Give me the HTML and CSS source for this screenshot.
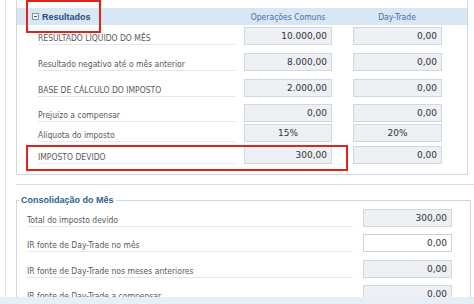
FILE: index.html
```html
<!DOCTYPE html>
<html lang="pt-BR">
  <head>
    <meta charset="UTF-8" />
    <title>Apuração do imposto</title>
    <link rel="stylesheet" href="styles.css">
  </head>
  <body>
    <div class="content">
      <section class="results">
        <div class="grid head">
          <div class="title"><span class="toggle"></span>Resultados</div>
          <div class="col-title">Operações Comuns</div>
          <div class="col-title">Day-Trade</div>
        </div>

        <div class="grid body">
          <div class="label">RESULTADO LÍQUIDO DO MÊS</div>
          <input class="field" value="10.000,00" readonly />
          <input class="field wide" value="0,00" readonly />

          <div class="label">Resultado negativo até o mês anterior</div>
          <input class="field" value="8.000,00" readonly />
          <input class="field wide" value="0,00" readonly />

          <div class="label">BASE DE CÁLCULO DO IMPOSTO</div>
          <input class="field" value="2.000,00" readonly />
          <input class="field wide" value="0,00" readonly />

          <div class="label">Prejuízo a compensar</div>
          <input class="field" value="0,00" readonly />
          <input class="field wide" value="0,00" readonly />

          <div class="label">Alíquota do imposto</div>
          <input class="field center" value="15%" readonly />
          <input class="field wide center" value="20%" readonly />

          <div class="label">IMPOSTO DEVIDO</div>
          <input class="field" value="300,00" readonly />
          <input class="field wide" value="0,00" readonly />
        </div>

        <!-- annotation boxes -->
        <div class="mark mark-title"></div>
        <div class="mark mark-row"></div>
      </section>

      <div class="divider"></div>

      <fieldset class="month">
        <legend>Consolidação do Mês</legend>
        <div class="month-rows">
          <div class="label">Total do imposto devido</div>
          <input class="field wide" value="300,00" readonly />

          <div class="label">IR fonte de Day-Trade no mês</div>
          <input class="field wide editable" value="0,00" />

          <div class="label">IR fonte de Day-Trade nos meses anteriores</div>
          <input class="field wide" value="0,00" readonly />

          <div class="label">IR fonte de Day-Trade a compensar</div>
          <input class="field wide" value="0,00" readonly />
        </div>
      </fieldset>
    </div>
    <div class="footer"></div>
  </body>
</html>
```

FILE: styles.css
```css
body {
  margin: 0;
  background-color: #fff;
  font-family: "DejaVu Sans Condensed", "DejaVu Sans", sans-serif;
  color: #555;
}

.content {
  height: 297px;
  overflow: hidden;
  margin-left: 5px;
  border-left: 1px solid #e1e5ea;
  padding-left: 10px;
}

.results {
  position: relative;
  width: 450px;
  padding: 8px 0 10px;
  border: 1px solid #cfd7e0;
  border-top: none;
}

.grid {
  display: grid;
  grid-template-columns: 227px 109px 89px;
}

.head {
  height: 17px;
  align-items: center;
  background-color: #d9e6f3;
}

.title {
  display: flex;
  align-items: center;
  padding-left: 15px;
  font-family: "Liberation Sans", Arial, sans-serif;
  font-size: 9px;
  font-weight: bold;
  color: #1f4d7d;
}

.toggle {
  position: relative;
  box-sizing: border-box;
  width: 7px;
  height: 7px;
  margin-right: 3px;
  border: 1px solid #8396ad;
  background-color: #f4f7fa;
}

.toggle::after {
  content: "";
  position: absolute;
  left: 1px;
  right: 1px;
  top: 2px;
  height: 1px;
  background-color: #4b5f78;
}

.col-title {
  width: 88px;
  text-align: center;
  font-size: 8.5px;
  color: #3d72aa;
}

.body {
  grid-template-rows: 20px 26px 26px 25px 20px 22px;
  align-items: end;
}

.label {
  font-size: 8.5px;
  line-height: 11px;
  color: #5a5a5a;
  border-bottom: 1px solid #e4e7eb;
}

.body .label {
  margin: 0 9px 0 21px;
}

.field {
  box-sizing: border-box;
  width: 88px;
  height: 18px;
  margin: 0;
  padding: 0 4px;
  border: 1px solid #d2d7de;
  background-color: #edf0f4;
  font-family: "DejaVu Sans", Verdana, sans-serif;
  font-size: 9px;
  color: #333;
  text-align: right;
  outline: none;
}

.field.wide {
  width: 89px;
}

.field.center {
  text-align: center;
}

.field.editable {
  background-color: #fff;
  border-color: #cdd2d8;
}

.mark {
  position: absolute;
  box-sizing: border-box;
  border: 2px solid #e2231a;
}

.mark-title {
  left: 9px;
  top: 0;
  width: 75px;
  height: 33px;
}

.mark-row {
  left: 9px;
  top: 145px;
  width: 322px;
  height: 26px;
}

.divider {
  height: 1px;
  margin-top: 9px;
  background-color: #d9dee4;
}

.month {
  width: 451px;
  margin: 9px 0 0;
  padding: 0 0 0 2px;
  border: 1px solid #cfd7e0;
}

.month legend {
  padding: 0 2px;
  font-family: "Liberation Sans", Arial, sans-serif;
  font-size: 9px;
  line-height: 12px;
  font-weight: bold;
  color: #2e5f90;
}

.month-rows {
  display: grid;
  grid-template-columns: 326px 89px;
  grid-template-rows: 21px 25px 26px 25px;
  column-gap: 10px;
  align-items: end;
  padding-left: 8px;
}

.footer {
  height: 7px;
  background-color: #e8eef5;
}
```
